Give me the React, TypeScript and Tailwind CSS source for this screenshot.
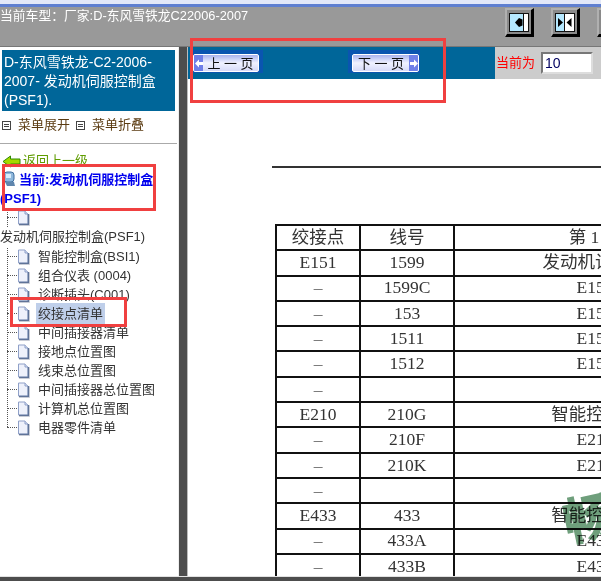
const SANS = "font-['Liberation_Sans','Noto_Sans_CJK_SC',sans-serif]";

function Page() {
  return (
    <svg width="13" height="16" viewBox="0 0 13 16" className="shrink-0">
      <path d="M1.5 1H8L11 4V14H1.5Z" fill="#eef1fb" stroke="#8fa0c8" />
      <path d="M8 1V4H11" fill="#d5def2" stroke="#8fa0c8" />
      <path d="M11.5 4V14.5H2" fill="none" stroke="#5f7398" strokeWidth="1.6" />
      <path d="M2 15.5H12.5V5" fill="none" stroke="#c8ccd6" />
    </svg>
  );
}

function SplitIcon({ mode }: { mode: "right" | "both" | "left" }) {
  return (
    <div className="w-[29px] h-[29px] bg-[#8a8a8a] border-t-2 border-l-2 border-t-[#b0b0b0] border-l-[#b0b0b0] border-r-[3px] border-b-[3px] border-r-black border-b-black flex items-center justify-center shrink-0">
      <svg width="20" height="19" viewBox="0 0 20 19">
        <rect x="0.5" y="0.5" width="19" height="18" fill="#b5e8ff" stroke="#111" />
        {mode === "right" && (
          <>
            <rect x="15" y="1" width="4" height="17" fill="#fff" />
            <path d="M14.5 1V18" stroke="#111" />
            <path d="M6 9.5L10 5L13.5 6.5V12.5L10 14Z" fill="#000" />
          </>
        )}
        {mode === "both" && (
          <>
            <rect x="10" y="1" width="9" height="17" fill="#fff" />
            <path d="M9.5 1V18" stroke="#111" />
            <path d="M3 5L8 9.5L3 14Z M11.5 9.5L16.5 5V14Z" fill="#000" />
          </>
        )}
        {mode === "left" && (
          <>
            <rect x="1" y="1" width="4" height="17" fill="#fff" />
            <path d="M5.5 1V18" stroke="#111" />
          </>
        )}
      </svg>
    </div>
  );
}

function NavButton({ dir }: { dir: "prev" | "next" }) {
  const arrow = (
    <div className="w-[9px] self-stretch bg-[#6f7fe8] flex items-center justify-center">
      <svg width="8" height="9" viewBox="0 0 8 9">
        {dir === "prev" ? (
          <path d="M0 4.5L4 0.5V3H8V6H4V8.5Z" fill="#fff" />
        ) : (
          <path d="M8 4.5L4 0.5V3H0V6H4V8.5Z" fill="#fff" />
        )}
      </svg>
    </div>
  );
  return (
    <div className={`bg-[#0a55b0] pt-1 pb-px flex ${dir === "prev" ? "pr-1 w-[70px]" : "pl-1 pr-px w-[72px]"}`}>
      <div className="flex-1 h-[18px] flex items-center border border-white rounded-[2px] overflow-hidden bg-gradient-to-b from-[#aab2ee] via-[#f0f2ff] to-[#d6daf8]">
        {dir === "prev" && arrow}
        <span className={`flex-1 text-center text-[13px] leading-none text-[#111] ${SANS}`}>
          {dir === "prev" ? "上 一 页" : "下 一 页"}
        </span>
        {dir === "next" && arrow}
      </div>
    </div>
  );
}

const items = ["智能控制盒(BSI1)", "组合仪表 (0004)", "诊断插头(C001)", "绞接点清单", "中间插接器清单", "接地点位置图", "线束总位置图", "中间插接器总位置图", "计算机总位置图", "电器零件清单"];

const rows: [string, string, string][] = [
  ["绞接点", "线号", "第 1 页"],
  ["E151", "1599", "发动机诊断盒"],
  ["–", "1599C", "E151"],
  ["–", "153", "E151"],
  ["–", "1511", "E151"],
  ["–", "1512", "E151"],
  ["–", "", ""],
  ["E210", "210G", "智能控制盒"],
  ["–", "210F", "E210"],
  ["–", "210K", "E210"],
  ["–", "", ""],
  ["E433", "433", "智能控制盒"],
  ["–", "433A", "E433"],
  ["–", "433B", "E433"],
];

export default function App() {
  return (
    <div className={`relative w-[601px] h-[581px] overflow-hidden bg-white flex flex-col ${SANS}`}>
      <div className="h-1 bg-[#e3e8f8] shrink-0" />
      <div className="h-[3px] bg-[#5f7fd0] shrink-0" />
      <header className="h-[40px] shrink-0 bg-[#999999] border-b border-[#777] flex justify-between">
        <div className="text-[12.8px] leading-4 text-white pt-[1px]">当前车型：厂家:D-东风雪铁龙C22006-2007</div>
        <div className="flex gap-[17px] pt-px pr-0 w-[96px] shrink-0 overflow-hidden">
          <SplitIcon mode="right" />
          <SplitIcon mode="both" />
          <SplitIcon mode="left" />
        </div>
      </header>

      <div className="flex-1 flex min-h-0">
        <aside className="w-[179px] shrink-0 bg-white pt-[3px] overflow-hidden border-r border-[#eeeeee]">
          <div className="ml-0.5 mr-[3px] h-[61px] bg-[#006699] text-white text-sm leading-[19px] px-0.5 py-[3px]">
            D-东风雪铁龙-C2-2006-2007- 发动机伺服控制盒(PSF1).
          </div>
          <div className="h-[33px] border-b border-[#aaa] flex items-center text-[13px] text-[#5a3a10] pl-0.5 pb-[4px] mr-px">
            <span className="w-[9px] h-[9px] border border-[#444] flex flex-col justify-center items-center gap-px shrink-0">
              <i className="block w-[5px] h-px bg-[#444]" /><i className="block w-[5px] h-px bg-[#444]" />
            </span>
            <span className="ml-[7px] w-[58px]">菜单展开</span>
            <span className="w-[9px] h-[9px] border border-[#444] flex flex-col justify-center items-center gap-px shrink-0">
              <i className="block w-[5px] h-px bg-[#444]" /><i className="block w-[5px] h-px bg-[#444]" />
            </span>
            <span className="ml-[7px]">菜单折叠</span>
          </div>
          <div className="h-[9px]" />
          <div className="flex items-center h-4 pl-[2px]">
            <svg width="19" height="13" viewBox="0 0 19 13" className="shrink-0">
              <path d="M1 6.5L8.5 1V4H18V9H8.5V12Z" fill="#a4d800" stroke="#2f8a00" />
            </svg>
            <span className="ml-[2px] text-[13px] text-[#5f9c00] underline">返回上一级</span>
          </div>
          <div className="text-[13px] leading-[19px] font-bold text-[#0000ee] mt-px">
            <svg width="14" height="17" viewBox="0 0 14 17" className="inline-block ml-[2px] mr-[3px] align-[-4px]">
              <rect x="2" y="1" width="10" height="10" rx="3" fill="#8fb8dc" stroke="#3f6f9f" />
              <path d="M4 3H9V7H4Z" fill="#d8ecfb" />
              <path d="M3 11H12L13 15H5Z" fill="#5f86ad" />
            </svg>
            当前:发动机伺服控制盒(PSF1)
          </div>
          <div className="relative text-[13px] text-[#333]">
            <div className="absolute left-[7px] top-0 h-[219px] border-l border-dotted border-[#555]" />
            <div className="h-[19px] flex items-center pl-[7px]">
              <span className="w-[10px] border-t border-dotted border-[#555]" />
              <Page />
            </div>
            <div className="h-[20px] leading-[19px] bg-white relative">发动机伺服控制盒(PSF1)</div>
            {items.map((t, i) => (
              <div key={t} className="h-[19px] flex items-center pl-[7px]">
                <span className="w-[10px] border-t border-dotted border-[#555] shrink-0" />
                <Page />
                <span className={`ml-[6px] px-[2px] leading-[19px] ${i === 3 ? "bg-[#bfcfea] h-[21px] leading-[21px]" : ""}`}>{t}</span>
              </div>
            ))}
          </div>
        </aside>

        <div className="w-[9px] shrink-0 bg-[#4d4d4d] border-r border-[#bbb]" />

        <main className="flex-1 min-w-0 flex flex-col overflow-hidden">
          <div className="h-[32px] shrink-0 flex">
            <div className="w-[307px] bg-[#006699] flex pl-[5px] pt-[3px] justify-between pr-[75px] items-start">
              <NavButton dir="prev" />
              <NavButton dir="next" />
            </div>
            <div className="flex-1 bg-[#cccccc] flex items-center pl-px">
              <span className="text-[13px] text-[#ff0000] w-[45px]">当前为</span>
              <div className="w-[52px] h-[22px] bg-white border-2 border-t-[#777] border-l-[#777] border-r-[#ddd] border-b-[#ddd] text-sm leading-[18px] text-[#000060] pl-0.5">10</div>
            </div>
          </div>

          <div className="flex-1 min-h-0 relative pl-[84px] pt-[87px]">
            <div className="w-[330px] h-0.5 bg-[#333] mb-[56px] blur-[0.3px]" />
            <table className="table-fixed border-collapse w-[460px] font-['Liberation_Serif','Noto_Sans_CJK_SC',serif] text-[17.5px] text-[#333] border-2 border-[#111] ml-[3px] blur-[0.3px]">
              <colgroup>
                <col className="w-[84px]" />
                <col className="w-[94px]" />
                <col className="w-[282px]" />
              </colgroup>
              <tbody>
                {rows.map((r, i) => (
                  <tr key={i} className="h-[25.3px]">
                    {r.map((c, j) => (
                      <td key={j} className={`border-2 border-[#111] text-center p-0 leading-none ${c === "–" ? "text-[#666]" : ""}`}>{c}</td>
                    ))}
                  </tr>
                ))}
              </tbody>
            </table>
          </div>
        </main>
      </div>

      <div className="h-[5px] shrink-0 bg-[#4d4d4d] border-t border-[#e2e2e2]" />

      <div className="absolute left-[564px] top-[495px] rotate-[-12deg] text-[50px] font-bold leading-none text-[#6f9f7c] [-webkit-text-stroke:1.5px_#6f9f7c] mix-blend-multiply pointer-events-none">畅</div>
      <div className="absolute left-[190px] top-[38px] w-[256px] h-[65px] border-[3px] border-[#f04040] pointer-events-none" />
      <div className="absolute left-[2px] top-[164px] w-[154px] h-[47px] border-[3px] border-[#f04040] pointer-events-none" />
      <div className="absolute left-[10px] top-[297px] w-[117px] h-[30px] border-[3px] border-[#f04040] pointer-events-none" />
    </div>
  );
}
